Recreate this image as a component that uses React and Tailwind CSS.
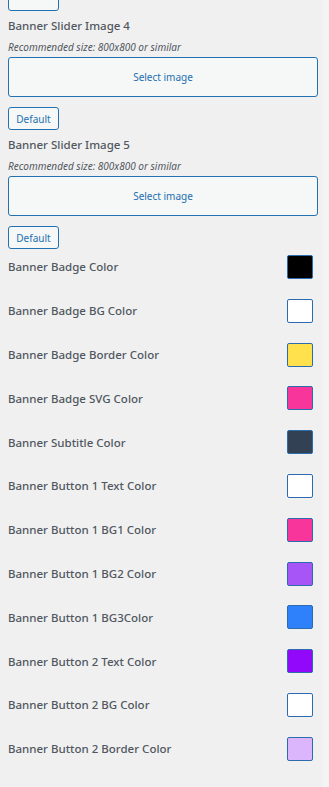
import React from 'react';

const font = { fontFamily: '"Noto Sans", "Liberation Sans", sans-serif' };

const colorSettings = [
    { label: 'Banner Badge Color', value: '#000000' },
    { label: 'Banner Badge BG Color', value: '#ffffff' },
    { label: 'Banner Badge Border Color', value: '#ffe14d' },
    { label: 'Banner Badge SVG Color', value: '#f7359a' },
    { label: 'Banner Subtitle Color', value: '#334155' },
    { label: 'Banner Button 1 Text Color', value: '#ffffff' },
    { label: 'Banner Button 1 BG1 Color', value: '#f7359a' },
    { label: 'Banner Button 1 BG2 Color', value: '#a855f7' },
    { label: 'Banner Button 1 BG3Color', value: '#2f80fb' },
    { label: 'Banner Button 2 Text Color', value: '#9108fb' },
    { label: 'Banner Button 2 BG Color', value: '#ffffff' },
    { label: 'Banner Button 2 Border Color', value: '#dcb6fd' },
];

const DefaultButton = () => (
    <button className="h-[23px] w-[51px] rounded-[3px] border border-[#2271b1] bg-[#f6f7f7] text-[10px] leading-none text-[#2271b1]">
        Default
    </button>
);

const ImageControl = ({ title }) => (
    <div className="flex flex-col">
        <h3 className="mt-[7px] text-[11.5px] leading-[16px] font-medium text-[#50575e]">{title}</h3>
        <p className="mt-[7px] text-[10px] leading-[12px] italic text-[#50575e]">Recommended size: 800x800 or similar</p>
        <button className="mt-[4px] h-[40px] w-full rounded-[3px] border border-[#2271b1] bg-[#f6f7f7] text-[10px] text-[#2271b1]">
            Select image
        </button>
        <div className="mt-[10px] flex">
            <DefaultButton />
        </div>
    </div>
);

const ColorRow = ({ label, value }) => (
    <div className="flex h-[24px] items-center justify-between">
        <span className="text-[11.5px] font-medium text-[#50575e]">{label}</span>
        <span
            className="mr-[5px] block h-[24px] w-[26px] rounded-[2px] border border-[#2c6cae]"
            style={{ backgroundColor: value }}
        />
    </div>
);

export default function App() {
    return (
        <div className="flex min-h-[787px] bg-[#f0f0f1]" style={font}>
            <div className="flex-1 pl-[8px] pr-[5px]">
                {/* cut-off button from the control above */}
                <div className="-mt-[13px] h-[24px] w-[51px] rounded-[3px] border border-[#2271b1] bg-[#f6f7f7]" />
                <ImageControl title="Banner Slider Image 4" />
                <ImageControl title="Banner Slider Image 5" />
                <div className="mt-[6px] flex flex-col gap-[19.8px]">
                    {colorSettings.map((c) => (
                        <ColorRow key={c.label} label={c.label} value={c.value} />
                    ))}
                </div>
            </div>
            <div className="w-[6px] bg-[#f4f4f5]" />
        </div>
    );
}
